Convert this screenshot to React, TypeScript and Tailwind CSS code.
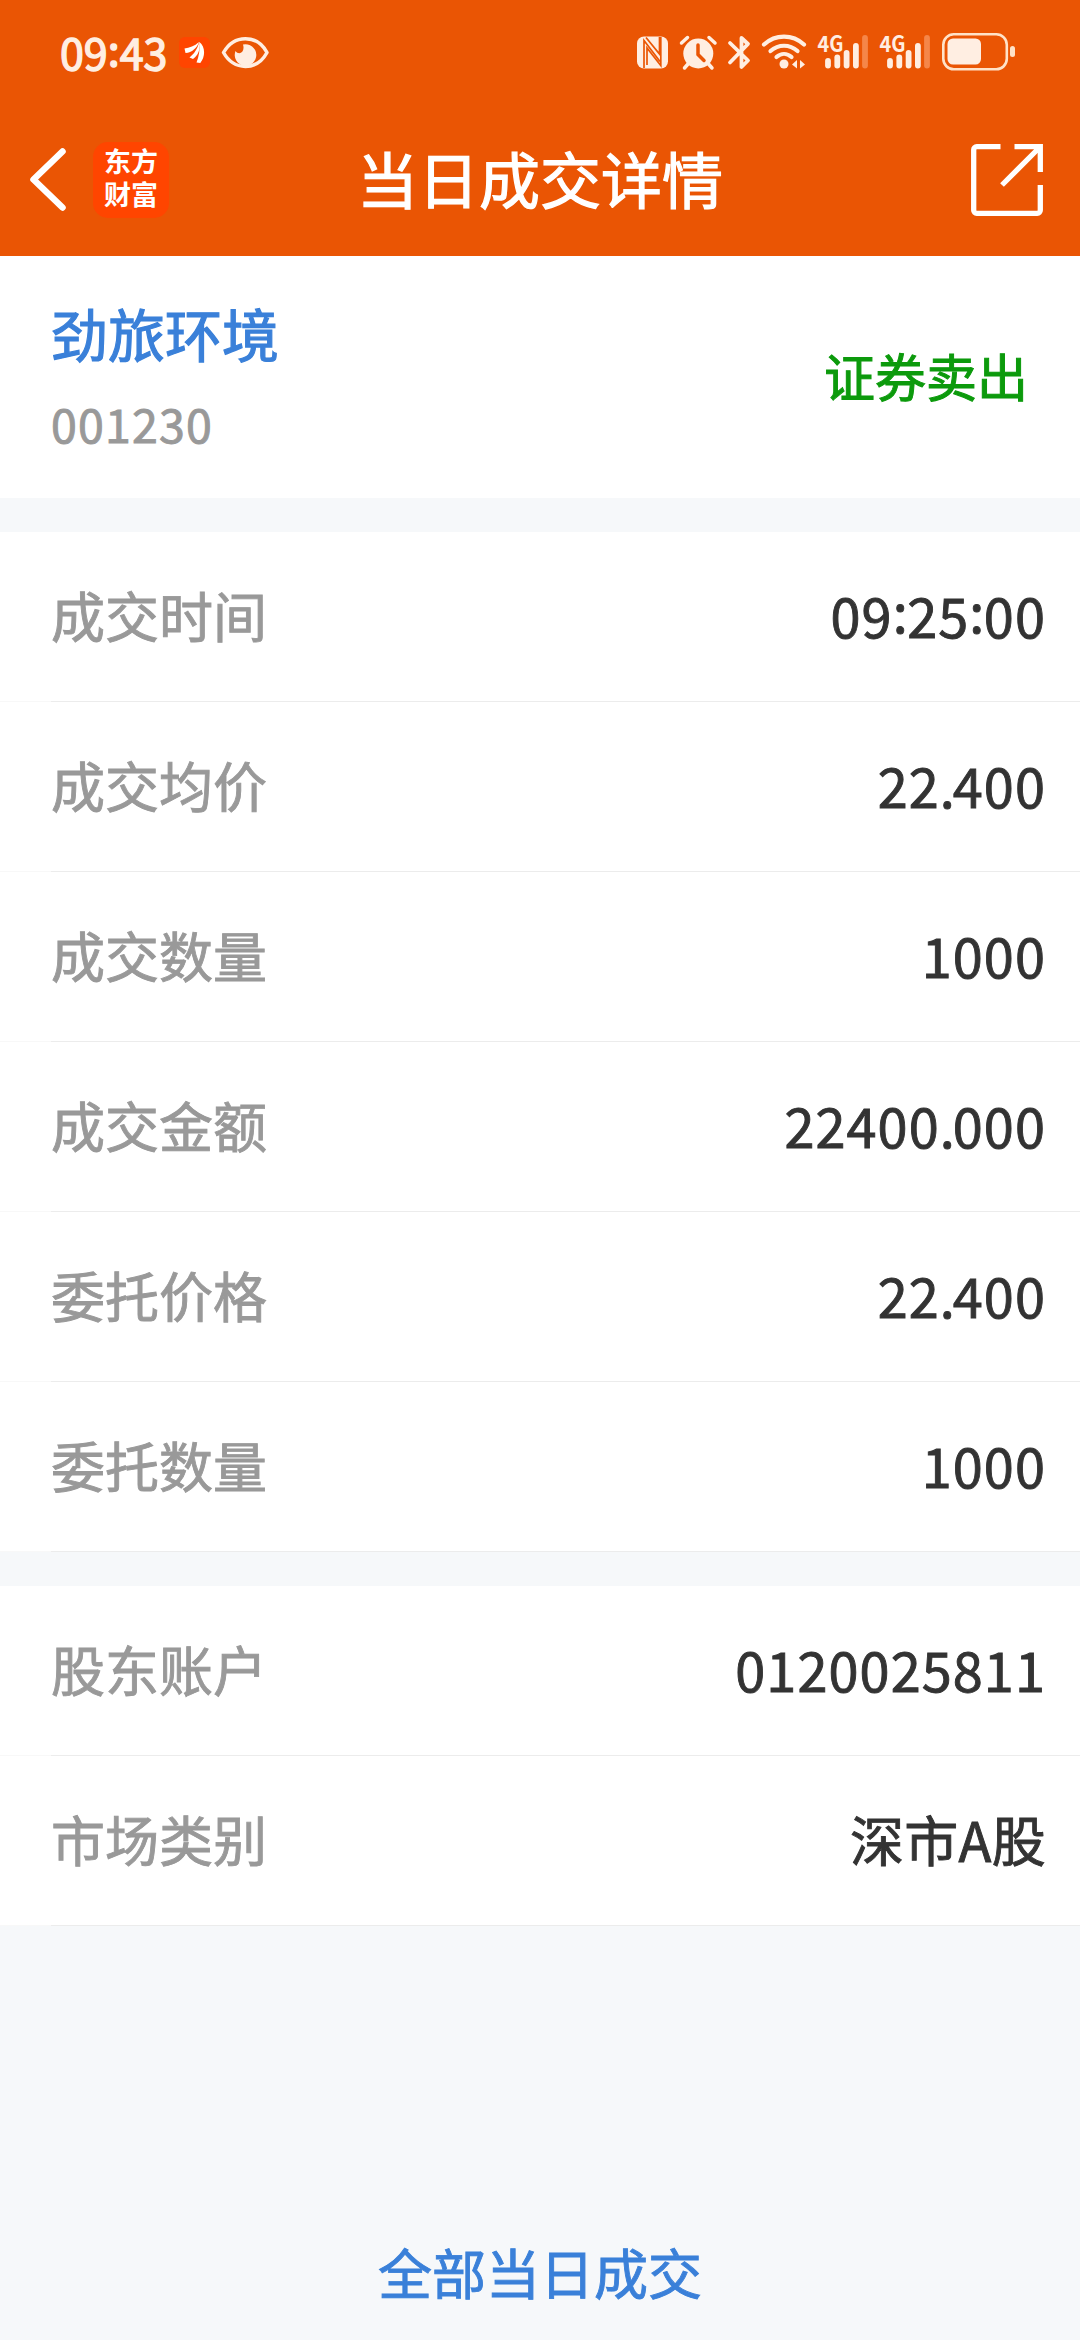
import type { ReactNode } from 'react';

interface DetailItem {
  label: string;
  value: string;
}

const tradeItems: DetailItem[] = [
  { label: '成交时间', value: '09:25:00' },
  { label: '成交均价', value: '22.400' },
  { label: '成交数量', value: '1000' },
  { label: '成交金额', value: '22400.000' },
  { label: '委托价格', value: '22.400' },
  { label: '委托数量', value: '1000' },
];

const accountItems: DetailItem[] = [
  { label: '股东账户', value: '0120025811' },
  { label: '市场类别', value: '深市A股' },
];

function StatusIcon({ width, children }: { width: number; children: ReactNode }) {
  return (
    <svg width={width} height={70} viewBox={`0 0 ${width} 70`} fill="none" className="shrink-0">
      {children}
    </svg>
  );
}

function SignalIcon() {
  return (
    <StatusIcon width={62}>
      <text x="5.5" y="31.5" fontSize="22.5" fontWeight="700" fill="#ffeee2" textLength="26" lengthAdjust="spacingAndGlyphs">
        4G
      </text>
      <g stroke="#ffeee2" strokeWidth="5.8" strokeLinecap="round">
        <path d="M16 41v4.5" />
        <path d="M25.3 37.5v8" />
        <path d="M34.6 33v12.5" />
        <path d="M43.9 26v19.5" />
        <path d="M53 18v27.5" stroke="#f58649" />
      </g>
    </StatusIcon>
  );
}

function StatusBar() {
  return (
    <div className="flex h-[70px] items-center justify-between pr-[60px] pl-[60px]">
      <div className="flex items-center">
        <span className="w-[112px] pb-[9px] text-[43px] leading-[60px] text-[#ffeee2] [-webkit-text-stroke:1.4px_#ffeee2]">
          09<span className="relative -top-1">:</span>43
        </span>
        <StatusIcon width={44}>
          <rect x="7" y="17" width="31" height="31" rx="6" fill="#ff4500" />
          <g fill="#fff">
            <path d="M12.500 28.500c5-0.500 10-2.500 14.500-6.500c-2 6-7 10.500-13.500 11z" />
            <path d="M17.500 37.500c4.500-3.500 8-8.500 9.700-15.500c1.500 7-1 13.500-6.200 17z" />
            <path d="M24.500 42.500c2.500-6 3.600-13 2.800-20.500c6.500 5 6 15 1 21z" />
          </g>
        </StatusIcon>
        <StatusIcon width={60}>
          <path d="M7.500 32.500C18 14 41 14 51 32.500C41 51 18 51 7.500 32.500z" stroke="#ffeee2" strokeWidth="3.500" strokeLinejoin="round" />
          <path d="M27 24.500a10.800 10.800 0 1 1-7.500 6.500c3 4.500 10 2 7.500-6.500z" fill="#ffeee2" />
        </StatusIcon>
      </div>
      <div className="flex items-center">
        <StatusIcon width={44}>
          <rect x="5" y="16.500" width="31" height="32" rx="7" fill="#ffeee2" />
          <path d="M12 48V20.500L28 41.500M27.500 17V34L14 17.500M28.800 17V45.500L15 28V45" stroke="#ea5504" strokeWidth="1.700" />
        </StatusIcon>
        <StatusIcon width={44}>
          <circle cx="22.300" cy="33.500" r="15" fill="#ffeee2" />
          <path d="M5.500 23l6-5.500M39 23l-6-5.500M12 44l-3.500 4M32.500 44l3.500 4" stroke="#ffeee2" strokeWidth="3.500" strokeLinecap="round" />
          <path d="M22 25v9.500l6 6" stroke="#ea5504" strokeWidth="3.500" strokeLinecap="round" />
        </StatusIcon>
        <StatusIcon width={38}>
          <path d="M10 23l18 17.500L21.500 47V18L28 24L10 42.500" stroke="#ffeee2" strokeWidth="3.800" strokeLinecap="round" strokeLinejoin="round" />
        </StatusIcon>
        <StatusIcon width={54}>
          <g stroke="#ffeee2" strokeWidth="4.200" strokeLinecap="round">
            <path d="M6 24.500c11.500-10.500 28.500-10.500 40 0" />
            <path d="M12.500 31c8-7 19-7 27 0" />
            <path d="M18.500 37c4.500-4 10.500-4 15 0" />
          </g>
          <circle cx="26" cy="44" r="4.500" fill="#ffeee2" />
          <path d="M39 40v8.500l-5-4zM42 40v8.500l5-4z" fill="#ffeee2" />
        </StatusIcon>
        <SignalIcon />
        <SignalIcon />
        <StatusIcon width={84}>
          <rect x="7.300" y="14.300" width="63.500" height="35" rx="10.500" stroke="#ffe2c8" strokeWidth="2.600" />
          <rect x="11.500" y="18.500" width="33.500" height="26" rx="5.500" fill="#ffeee2" />
          <rect x="74" y="26" width="5" height="11" rx="2.500" fill="#ffe2c8" />
        </StatusIcon>
      </div>
    </div>
  );
}

function NavBar() {
  return (
    <div className="flex h-[148px] items-center pr-[37px] pl-[29px]">
      <div className="flex flex-1 items-center gap-[26px]">
        <svg width="38" height="64" viewBox="0 0 38 64" fill="none">
          <path d="M33.5 3.5L4.500 31.500L33.5 59.500" stroke="#fff" strokeWidth="6.500" strokeLinecap="round" strokeLinejoin="round" />
        </svg>
        <div className="flex size-[76px] flex-col items-center justify-center rounded-[15px] bg-[#ff4500] font-['Liberation_Sans','Noto_Sans_CJK_SC',sans-serif] text-[27px] leading-[33px] font-bold text-white">
          <span>东方</span>
          <span>财富</span>
        </div>
      </div>
      <h1 className="pr-[4px] pb-[4px] pl-[12px] text-[61px] leading-[80px] whitespace-nowrap text-white [-webkit-text-stroke:1.2px_#fff]">
        当日成交详情
      </h1>
      <div className="flex flex-1 justify-end">
        <svg width="72" height="72" viewBox="0 0 72 72" fill="none">
          <g stroke="#fff" strokeWidth="5.300">
            <path d="M29.500 2.700H5.700a3 3 0 0 0-3 3V66.300a3 3 0 0 0 3 3H66.300a3 3 0 0 0 3-3V41" />
            <path d="M43.500 2.700H69.300V28M68.500 3.500L31 41" />
          </g>
        </svg>
      </div>
    </div>
  );
}

// colons sit centred on the digits, dots are set a little tighter
function NumberText({ value }: { value: string }) {
  return (
    <span className="text-[54px] leading-[80px] tracking-[1.1px] text-[#333] [-webkit-text-stroke:0.9px_#333]">
      {value.split(/([:.])/).map((part, i) => {
        if (part === ':') {
          return (
            <span key={i} className="relative -top-[5px] tracking-[-0.5px]">
              :
            </span>
          );
        }
        if (part === '.') {
          return (
            <span key={i} className="tracking-[-2px]">
              .
            </span>
          );
        }
        return part;
      })}
    </span>
  );
}

function DetailRow({ label, value }: DetailItem) {
  // the separator is fainter under the left inset
  return (
    <div className="flex h-[170px] flex-col bg-white">
      <div className="flex flex-1 items-center justify-between pr-[34px] pb-[3px] pl-[51px]">
        <span className="text-[54px] leading-[80px] text-[#999] [-webkit-text-stroke:0.9px_#999]">{label}</span>
        {/^\d/.test(value) ? (
          <NumberText value={value} />
        ) : (
          <span className="text-[54px] leading-[80px] tracking-[0.3px] text-[#333] [-webkit-text-stroke:0.9px_#333]">{value}</span>
        )}
      </div>
      <div className="flex h-px">
        <div className="w-[51px] bg-[#f8f8f8]" />
        <div className="flex-1 bg-[#ececec]" />
      </div>
    </div>
  );
}

export default function App() {
  return (
    <div className="flex h-[2340px] w-[1080px] flex-col overflow-hidden bg-[#f6f8fa] font-['Noto_Sans_CJK_SC',sans-serif]">
      <header className="flex h-[256px] flex-col gap-[16px] bg-[#ea5504] pt-[20px]">
        <StatusBar />
        <NavBar />
      </header>

      <section className="flex h-[242px] items-center justify-between bg-white pr-[52px] pl-[51px]">
        <div className="flex flex-col pb-[7px]">
          <span className="text-[57px] leading-[80px] text-[#3a80d9] [-webkit-text-stroke:1.2px_#3a80d9]">劲旅环境</span>
          <span className="mt-[19px] text-[46.5px] leading-[64px] tracking-[1.2px] text-[#999] [-webkit-text-stroke:0.9px_#999]">
            001230
          </span>
        </div>
        <span className="pb-[4px] text-[51px] leading-[80px] text-[#0c9a0c] [-webkit-text-stroke:1px_#0c9a0c]">证券卖出</span>
      </section>

      <section className="mt-[34px]">
        {tradeItems.map((item) => (
          <DetailRow key={item.label} {...item} />
        ))}
      </section>

      <section className="mt-[34px]">
        {accountItems.map((item) => (
          <DetailRow key={item.label} {...item} />
        ))}
      </section>

      <button className="mt-auto mb-[28px] self-center text-[54px] leading-[80px] text-[#3a80d9] [-webkit-text-stroke:0.9px_#3a80d9]">
        全部当日成交
      </button>
    </div>
  );
}
